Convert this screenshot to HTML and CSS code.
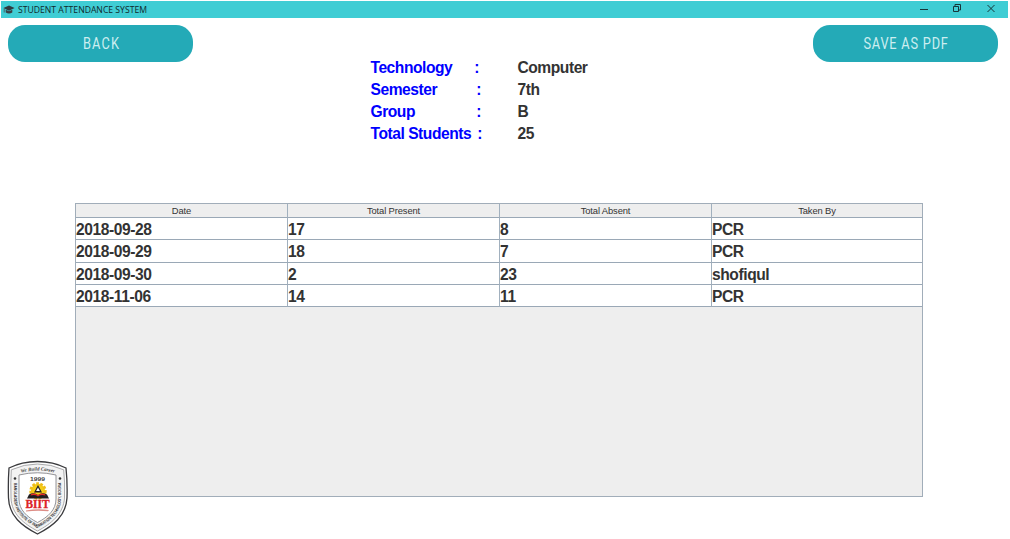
FILE: index.html
```html
<!DOCTYPE html>
<html lang="en">
<head>
<meta charset="utf-8">
<title>STUDENT ATTENDANCE SYSTEM</title>
<link rel="stylesheet" href="styles.css">
</head>
<body>
<header class="titlebar">
  <svg class="cap" width="12" height="10" viewBox="0 0 12 10"><path d="M6 .5 11.6 3 6 5.7 .4 3Z" fill="#303a40"/><path d="M2.7 4.8 6 6.3l3.3-1.5v2.7Q6 9.6 2.7 7.5Z" fill="#3a4145"/><path d="M1.2 3.5v4" stroke="#4b575c" stroke-width=".9"/></svg>
  <svg class="title" width="134" height="17"><text x="0" y="12.2" textLength="129" lengthAdjust="spacingAndGlyphs">STUDENT ATTENDANCE SYSTEM</text></svg>
  <svg class="controls" width="90" height="17" fill="none" stroke="#17363a" stroke-width="1"><path d="M1 8.5h8"/><path d="M34.5 5.5h5v5h-5zM36 5V3.5h5.5v5.5H40"/><path d="m68.5 4 7 7m0-7-7 7"/></svg>
</header>
<nav class="actions">
  <button class="pill"><svg width="185" height="37"><text transform="translate(75 24) scale(.8 1)" textLength="45" lengthAdjust="spacing">BACK</text></svg></button>
  <button class="pill"><svg width="185" height="37"><text transform="translate(50.5 24) scale(.8 1)" textLength="105.5" lengthAdjust="spacing">SAVE AS PDF</text></svg></button>
</nav>
<dl class="info">
  <div class="line"><dt><span>Technology</span><span class="c1">:</span></dt><dd>Computer</dd></div>
  <div class="line"><dt><span>Semester</span><span class="c2">:</span></dt><dd>7th</dd></div>
  <div class="line"><dt><span>Group</span><span class="c3">:</span></dt><dd>B</dd></div>
  <div class="line"><dt><span>Total Students</span><span>:</span></dt><dd>25</dd></div>
</dl>
<main class="bottom">
  <svg class="crest" width="61" height="76" viewBox="0 0 61 76">
    <defs>
      <path id="ring" d="M7 20V38C7 53 17 60.500 30.500 68C44 60.500 54 53 54 38V20"/>
      <path id="arch" d="M11 13.500Q30.500 7.500 50 13.500"/>
    </defs>
    <path d="M2 8Q15 1.500 30.500 1.500Q46 1.500 59 8Q60.500 22 60 38C59 56 46 66 30.500 74C15 66 2 56 1.500 38Q1 22 2 8Z" fill="#fff" stroke="#3a3a3d" stroke-width="1.300"/>
    <path d="M4.300 9.800Q17 4 30.500 4Q44 4 56.700 9.800Q58 22 57.500 38C56.500 54 44 64 30.500 71C17 64 4.500 54 4 38Q3.500 22 4.300 9.800Z" fill="#f3f3f3" stroke="#a0a0a3" stroke-width=".9"/>
    <path d="M12 15Q30.500 10.500 49 15V39C49 50 41 57 30.500 62.500C20 57 12 50 12 39Z" fill="#fff" stroke="#88888c" stroke-width=".9"/>
    <text class="motto"><textPath href="#arch" startOffset="3" textLength="34" lengthAdjust="spacingAndGlyphs">We Build Career</textPath></text>
    <text class="rim"><textPath href="#ring" startOffset="3" textLength="111" lengthAdjust="spacingAndGlyphs">BANGLADESH INSTITUTE OF INFORMATION TECHNOLOGY, BOGRA</textPath></text>
    <circle cx="8" cy="18.500" r="1.300" fill="#333"/><circle cx="53" cy="18.500" r="1.300" fill="#333"/>
    <text class="year" x="23" y="20.500" textLength="15" lengthAdjust="spacingAndGlyphs">1999</text>
    <circle cx="31" cy="31" r="7.2" fill="#f5ce19" stroke="#eebd19" stroke-width="3" stroke-dasharray="2.600 1.400"/>
    <path d="m31 25 4 7.500h-8Z" fill="#242124"/><path d="m31 27.500 1.900 3.500h-3.800Z" fill="#fff"/>
    <path d="M22 34.500q5-2.500 9 .5 4-3 9-.5l2 4h-22Z" fill="#201d20"/><path d="M24 34.300q4-2 7 1 3-3 7-1l.5 1.200q-4.500-1.200-7.500 1-3-2.200-7.500-1Z" fill="#e52b27"/>
    <text class="biit" x="18.500" y="48" textLength="24" lengthAdjust="spacingAndGlyphs">BIIT</text>
    <path d="M19 50.500q11-2 23-.5l-1 1.200q-11-1.200-22 .3Z" fill="#dd8c85"/>
  </svg>
  <section class="panel">
    <div class="row head"><span>Date</span><span>Total Present</span><span>Total Absent</span><span>Taken By</span></div>
    <div class="row"><span>2018-09-28</span><span>17</span><span>8</span><span>PCR</span></div>
    <div class="row tall"><span>2018-09-29</span><span>18</span><span>7</span><span>PCR</span></div>
    <div class="row"><span>2018-09-30</span><span>2</span><span>23</span><span>shofiqul</span></div>
    <div class="row"><span>2018-11-06</span><span>14</span><span>11</span><span>PCR</span></div>
  </section>
</main>
</body>
</html>
```
FILE: styles.css
```css
* { box-sizing: border-box; }
body { margin: 0; width: 1010px; height: 539px; overflow: hidden; background: #fff; font-family: "Liberation Sans", Arial, sans-serif; }
svg { display: block; }
.titlebar { display: flex; align-items: center; height: 17px; margin: 1px 2px 0 1px; padding-left: 2px; background: #40cdd4; }
.title { margin-left: 3px; overflow: visible; font: 9.5px/1 "Open Sans", "Noto Sans", sans-serif; fill: #10292c; }
.controls { margin: 0 -1px 0 auto; }
.actions { display: flex; justify-content: space-between; margin: 7px 12px 0 8px; }
.pill { width: 185px; height: 37px; padding: 0; border: 0; border-radius: 17px; background: #24aab7; }
.pill text { font: 400 16px Roboto, sans-serif; fill: #cdeef0; }
.info { width: 300px; margin: -5px 0 0 370.5px; font-size: 15.6px; font-weight: bold; letter-spacing: -.46px; }
.line { display: flex; height: 22px; line-height: 22px; }
.line dt { display: flex; justify-content: space-between; width: 111.5px; margin-right: 35.5px; color: #00f; }
.line dd { margin: 0; color: #333; }
.c1 { margin-right: 3px; }
.c2 { margin-right: 1px; }
.c3 { margin-right: 1px; }
.bottom { display: flex; align-items: flex-start; margin: 58px 0 0 7px; }
.crest { flex: none; margin: 257px 7px 0 0; }
.panel { width: 848px; height: 294px; border: 1px solid #a1adb9; background: #eee; }
.row { display: grid; grid-template-columns: 212px 212px 212px 210px; height: 22px; background: #fff; color: #333; font-size: 15.6px; font-weight: bold; letter-spacing: -.42px; }
.tall { height: 23px; }
.row span { border-right: 1px solid #a1b0be; border-bottom: 1px solid #9aa8b6; }
.row span:last-child { border-right: 0; }
.row:not(.head) span { padding-top: 2px; line-height: 19px; }
.head { height: 14px; background: #eee; font-size: 9.4px; font-weight: normal; letter-spacing: -.12px; text-align: center; }
.head span { padding-top: 1px; line-height: 12px; }
.motto { font: italic bold 5px "Liberation Serif", serif; fill: #444; }
.rim { font: bold 4.3px "Liberation Sans", sans-serif; fill: #333; }
.year { font: bold 6px "Liberation Sans", sans-serif; fill: #444; }
.biit { font: bold 12px "Liberation Serif", serif; fill: #dc2227; stroke: #dc2227; stroke-width: .3px; }
```
